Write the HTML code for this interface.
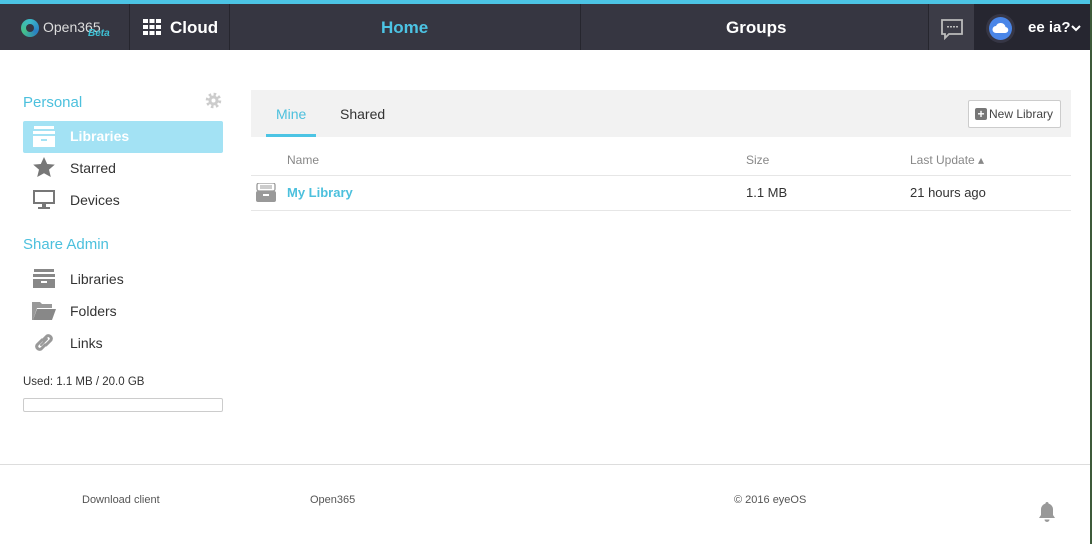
<!DOCTYPE html>
<html><head><meta charset="utf-8"><style>
*{margin:0;padding:0;box-sizing:border-box}
body{width:1092px;height:544px;background:#fff;font-family:"Liberation Sans",sans-serif;position:relative;overflow:hidden;color:#333}
.abs{position:absolute}
.top{left:0;top:0;width:1092px;height:4px;background:#4cc4e4}
.hdr{left:0;top:4px;width:1092px;height:46px;background:#363641}
.sep{top:4px;width:1px;height:46px;background:#26262e}
.ht{color:#fff;font-weight:bold;font-size:17px;top:18px}
.nav{font-size:14px;color:#333}
.blue{color:#4cc0dd}
.gray{color:#888}
</style></head><body>
<div class="abs top"></div>
<div class="abs hdr"></div>
<div class="abs sep" style="left:129px"></div>
<div class="abs sep" style="left:229px"></div>
<div class="abs sep" style="left:580px"></div>
<div class="abs sep" style="left:928px"></div>
<div class="abs" style="left:929px;top:4px;width:45px;height:46px;background:#3c3c47"></div>
<div class="abs" style="left:974px;top:4px;width:116px;height:46px;background:#262630"></div>
<div class="abs" style="left:1090px;top:0;width:2px;height:544px;background:#3d5a3a"></div>
<div class="abs" style="left:21px;top:19px;width:18px;height:18px;border-radius:50%;background:conic-gradient(#3bb8c9,#2a7fc4,#45c08a,#3bb8c9)"></div>
<div class="abs" style="left:26px;top:24px;width:8px;height:8px;border-radius:50%;background:#363641"></div>
<div class="abs" style="left:43px;top:19px;color:#ddd;font-size:14px">Open365</div>
<div class="abs" style="left:88px;top:28px;color:#3ec2d6;font-size:10px;font-weight:bold;font-style:italic">Beta</div>
<svg class="abs" style="left:143px;top:19px" width="18" height="16"><g fill="#fff"><rect x="0" y="0" width="5" height="4"/><rect x="6.5" y="0" width="5" height="4"/><rect x="13" y="0" width="5" height="4"/><rect x="0" y="6" width="5" height="4"/><rect x="6.5" y="6" width="5" height="4"/><rect x="13" y="6" width="5" height="4"/><rect x="0" y="12" width="5" height="4"/><rect x="6.5" y="12" width="5" height="4"/><rect x="13" y="12" width="5" height="4"/></g></svg>
<div class="abs ht" style="left:170px">Cloud</div>
<div class="abs ht" style="left:381px;color:#4cc4e4">Home</div>
<div class="abs ht" style="left:726px">Groups</div>
<svg class="abs" style="left:940px;top:19px" width="24" height="21"><path d="M2 1h20v14H9l-4 4v-4H2z" fill="none" stroke="#bbb" stroke-width="1.8"/><g fill="#bbb"><rect x="7" y="7" width="2" height="1.5"/><rect x="10" y="7" width="2" height="1.5"/><rect x="13" y="7" width="2" height="1.5"/><rect x="16" y="7" width="2" height="1.5"/></g></svg>
<div class="abs" style="left:986px;top:14px;width:29px;height:29px;border-radius:50%;background:#363645"></div>
<div class="abs" style="left:989px;top:17px;width:23px;height:23px;border-radius:50%;background:#4a86e8"></div>
<svg class="abs" style="left:992px;top:22px" width="17" height="12"><path d="M4 11a3.5 3.5 0 010-7 5 5 0 019.5 1A3 3 0 0113 11z" fill="#fff"/></svg>
<div class="abs" style="left:1028px;top:19px;color:#fff;font-weight:bold;font-size:15px">ee ia?</div>
<svg class="abs" style="left:1071px;top:25px" width="10" height="7"><path d="M1 1l4 4 4-4" stroke="#fff" stroke-width="2" fill="none"/></svg>
<div class="abs blue" style="left:23px;top:94px;font-size:15px">Personal</div>
<svg class="abs" style="left:205px;top:92px" width="17" height="17"><circle cx="8.5" cy="8.5" r="6" fill="none" stroke="#ccc" stroke-width="3.5" stroke-dasharray="2.4 2.3"/><circle cx="8.5" cy="8.5" r="5" fill="#ccc"/><circle cx="8.5" cy="8.5" r="2" fill="#fff"/></svg>
<div class="abs" style="left:23px;top:121px;width:200px;height:32px;background:#a3e2f4;border-radius:2px"></div>
<svg class="abs" style="left:33px;top:126px" width="23" height="21"><g fill="#fff"><rect x="1" y="0" width="20" height="3"/><rect x="0" y="5" width="22" height="3"/><rect x="0" y="10" width="22" height="11"/></g><rect x="8" y="13" width="6" height="2" fill="#a3e2f4"/></svg>
<div class="abs" style="left:70px;top:128px;font-size:14px;font-weight:bold;color:#fff">Libraries</div>
<svg class="abs" style="left:33px;top:157px" width="22" height="21"><path d="M11 0l3.2 7 7.6.6-5.8 5 1.8 7.4L11 16.2 4.2 20l1.8-7.4-5.8-5L7.8 7z" fill="#777"/></svg>
<div class="abs nav" style="left:70px;top:160px">Starred</div>
<svg class="abs" style="left:33px;top:190px" width="22" height="20"><rect x="0" y="0" width="22" height="14" fill="#777"/><rect x="2" y="2" width="18" height="10" fill="#fff"/><rect x="9" y="14" width="4" height="3" fill="#777"/><rect x="5" y="17" width="12" height="2" fill="#777"/></svg>
<div class="abs nav" style="left:70px;top:192px">Devices</div>
<div class="abs blue" style="left:23px;top:236px;font-size:15px">Share Admin</div>
<svg class="abs" style="left:33px;top:269px" width="22" height="19"><g fill="#888"><rect x="1" y="0" width="20" height="3"/><rect x="0" y="5" width="22" height="3"/><rect x="0" y="10" width="22" height="9"/></g><rect x="8" y="12" width="6" height="2" fill="#fff"/></svg>
<div class="abs nav" style="left:70px;top:271px">Libraries</div>
<svg class="abs" style="left:32px;top:302px" width="24" height="18"><path d="M0 0h8l2 2h10v4H5L1 18H0z" fill="#999"/><path d="M5 7h19l-4 11H1z" fill="#888"/></svg>
<div class="abs nav" style="left:70px;top:303px">Folders</div>
<svg class="abs" style="left:33px;top:332px" width="22" height="21"><g fill="none" stroke="#999" stroke-width="3" stroke-linecap="round"><path d="M9 8l-5 5a3 3 0 004 4l4-4"/><path d="M13 13l5-5a3 3 0 00-4-4l-4 4"/><path d="M8 13l6-6" stroke-width="2"/></g></svg>
<div class="abs nav" style="left:70px;top:335px">Links</div>
<div class="abs" style="left:23px;top:376px;font-size:11.5px;color:#333">Used: 1.1 MB / 20.0 GB</div>
<div class="abs" style="left:23px;top:398px;width:200px;height:14px;border:1px solid #ccc;border-radius:2px"></div>
<div class="abs" style="left:251px;top:90px;width:820px;height:47px;background:#f2f2f2"></div>
<div class="abs blue" style="left:276px;top:106px;font-size:14px">Mine</div>
<div class="abs" style="left:266px;top:134px;width:50px;height:3px;background:#4cc4e4"></div>
<div class="abs nav" style="left:340px;top:106px">Shared</div>
<div class="abs" style="left:968px;top:100px;width:93px;height:28px;border:1px solid #ccc;background:#fff;border-radius:2px"></div>
<div class="abs" style="left:975px;top:108px;width:12px;height:12px;background:#777;border-radius:2px;color:#fff;font-size:12px;font-weight:bold;line-height:12px;text-align:center">+</div>
<div class="abs" style="left:989px;top:107px;font-size:12px;color:#444">New Library</div>
<div class="abs gray" style="left:287px;top:153px;font-size:12px">Name</div>
<div class="abs gray" style="left:746px;top:153px;font-size:12px">Size</div>
<div class="abs gray" style="left:910px;top:153px;font-size:12px">Last Update ▴</div>
<div class="abs" style="left:251px;top:175px;width:820px;height:1px;background:#e6e6e6"></div>
<svg class="abs" style="left:256px;top:183px" width="20" height="19"><rect x="1" y="0" width="18" height="8" rx="2" fill="none" stroke="#999" stroke-width="1.3"/><path d="M4 3h12M4 5h12" stroke="#999"/><rect x="0" y="8" width="20" height="11" rx="2" fill="#999"/><rect x="7" y="11" width="6" height="2" fill="#fff"/></svg>
<div class="abs blue" style="left:287px;top:185px;font-size:13px;font-weight:bold">My Library</div>
<div class="abs" style="left:746px;top:185px;font-size:13px">1.1 MB</div>
<div class="abs" style="left:910px;top:185px;font-size:13px">21 hours ago</div>
<div class="abs" style="left:251px;top:210px;width:820px;height:1px;background:#e6e6e6"></div>
<div class="abs" style="left:0;top:464px;width:1090px;height:1px;background:#ddd"></div>
<div class="abs" style="left:82px;top:494px;font-size:11px;color:#555">Download client</div>
<div class="abs" style="left:310px;top:494px;font-size:11px;color:#555">Open365</div>
<div class="abs" style="left:734px;top:494px;font-size:11px;color:#555">© 2016 eyeOS</div>
<svg class="abs" style="left:1038px;top:501px" width="18" height="21"><path d="M9 1a1.5 1.5 0 011.5 1.5 6 6 0 014.5 6V14l2 3H1l2-3V8.5a6 6 0 014.5-6A1.5 1.5 0 019 1z" fill="#999"/><path d="M6.5 18.5a2.5 2.5 0 005 0z" fill="#999"/></svg>
</body></html>
